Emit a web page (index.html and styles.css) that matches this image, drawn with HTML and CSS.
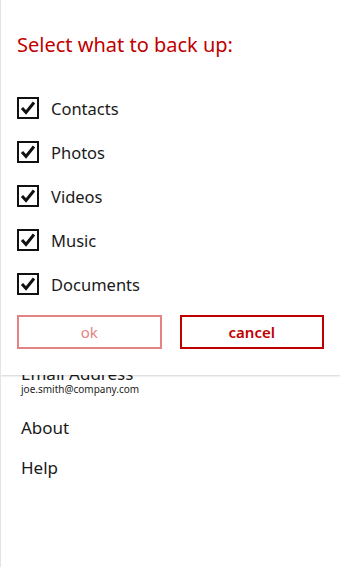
FILE: index.html
```html
<!DOCTYPE html>
<html lang="en">
<head>
<meta charset="UTF-8">
<meta name="viewport" content="width=device-width, initial-scale=1.0">
<title>Backup</title>
<link rel="stylesheet" href="styles.css">
</head>
<body>
<div class="page">
  <div class="settings">
    <div class="setting">
      <div class="setting-title">Email Address</div>
      <div class="setting-value">joe.smith@company.com</div>
    </div>
    <div class="links">
      <div class="link">About</div>
      <div class="link">Help</div>
    </div>
  </div>

  <div class="popup">
    <h1>Select what to back up:</h1>
    <div class="options">
      <label class="option"><span class="box"><svg viewBox="0 0 18 18"><path d="M3 9 L7 13.5 L15 3.5"/></svg></span>Contacts</label>
      <label class="option"><span class="box"><svg viewBox="0 0 18 18"><path d="M3 9 L7 13.5 L15 3.5"/></svg></span>Photos</label>
      <label class="option"><span class="box"><svg viewBox="0 0 18 18"><path d="M3 9 L7 13.5 L15 3.5"/></svg></span>Videos</label>
      <label class="option"><span class="box"><svg viewBox="0 0 18 18"><path d="M3 9 L7 13.5 L15 3.5"/></svg></span>Music</label>
      <label class="option"><span class="box"><svg viewBox="0 0 18 18"><path d="M3 9 L7 13.5 L15 3.5"/></svg></span>Documents</label>
    </div>
    <div class="buttons">
      <button class="btn btn-ok">ok</button>
      <button class="btn btn-cancel">cancel</button>
    </div>
  </div>
</div>
</body>
</html>
```

FILE: styles.css
```css
html, body { margin: 0; padding: 0; background: #fff; }
body { font-family: "Noto Sans", "Open Sans", sans-serif; color: #1a1a1a; }
.page { position: relative; width: 340px; height: 567px; border-left: 1px solid #e4e4e4; box-sizing: border-box; overflow: hidden; }

.settings { padding: 364px 0 0 20px; }
.setting-title { font-size: 17px; line-height: 19px; }
.setting-value { font-size: 10px; line-height: 13px; color: #222; }
.links { margin-top: 12px; }
.link { font-size: 17px; line-height: 40px; }

.popup { position: absolute; top: 0; left: 0; right: 0; height: 375px; background: #fff; padding: 30px 16px 0 16px; box-sizing: border-box; box-shadow: 0 1px 2px rgba(0,0,0,0.18); }
.popup h1 { margin: 0 0 26px; font-size: 20px; line-height: 30px; font-weight: normal; color: #c00000; }

.options { display: flex; flex-direction: column; }
.option { display: flex; align-items: center; height: 44px; font-size: 16.5px; color: #1a1a1a; }
.box { width: 22px; height: 22px; border: 2px solid #111; box-sizing: border-box; margin-right: 12px; display: flex; }
.box svg { width: 18px; height: 18px; }
.box path { fill: none; stroke: #111; stroke-width: 3; }

.buttons { display: flex; gap: 18px; margin-top: 9px; }
.btn { flex: 1; height: 34px; background: #fff; font-family: inherit; font-size: 15px; border: 2px solid; padding: 0; }
.btn-ok { border-color: #e38383; color: #e38383; }
.btn-cancel { border-color: #c00000; color: #c00000; font-weight: 600; }
```
